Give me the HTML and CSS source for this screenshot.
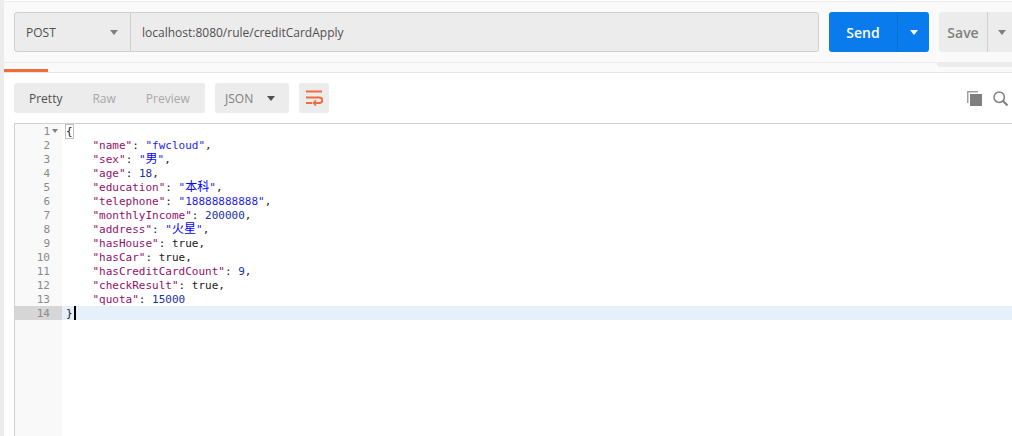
FILE: index.html
```html
<!DOCTYPE html>
<html lang="en">
<head>
<meta charset="utf-8">
<title>Postman response</title>
<link rel="stylesheet" href="styles.css">
</head>
<body>
<div class="app">
  <div class="top-strip"></div>
  <header class="request">
    <div class="url-group">
      <div class="method"><span>POST</span><i class="caret"></i></div>
      <div class="url">localhost:8080/rule/creditCardApply</div>
    </div>
    <div class="send"><span class="send-label">Send</span><span class="send-drop"><i class="caret white"></i></span></div>
    <div class="save"><span class="save-label">Save</span><span class="save-drop"><i class="caret"></i></span></div>
  </header>
  <div class="tabs"><div class="tab-active"></div><div class="save-shadow"></div></div>
  <div class="toolbar">
    <div class="views"><span class="on">Pretty</span><span>Raw</span><span>Preview</span></div>
    <div class="format"><span>JSON</span><i class="caret dark"></i></div>
    <div class="wrap">
      <svg width="18" height="16" viewBox="0 0 18 16" fill="none" stroke="#f26b3a" stroke-width="2">
        <path d="M1 1.500h16M1 7.500h13.500a2.500 2.500 0 0 1 0 5.500H9"/>
        <path d="M1 13h6"/>
        <path d="M11 10.300L8.500 13l2.500 2.700" stroke-width="1.500"/>
      </svg>
    </div>
    <div class="tools">
      <svg width="15" height="15" viewBox="0 0 15 15"><path fill="#a0a0a0" d="M0 0h11v1.500H1.500V12H0z"/><path fill="#7f7f7f" d="M3 3h12v12H3z"/></svg>
      <svg width="15" height="15" viewBox="0 0 15 15" fill="none" stroke="#7f7f7f" stroke-width="1.500"><circle cx="6.200" cy="6.200" r="5.200"/><path d="M10 10l4.500 4.500" stroke-width="2"/></svg>
    </div>
  </div>
  <div class="editor">
    <div class="gutter">
      <div class="ln">1<i class="fold"></i></div><div class="ln">2</div><div class="ln">3</div><div class="ln">4</div><div class="ln">5</div><div class="ln">6</div><div class="ln">7</div><div class="ln">8</div><div class="ln">9</div><div class="ln">10</div><div class="ln">11</div><div class="ln">12</div><div class="ln">13</div><div class="ln cur">14</div>
    </div>
    <div class="code">
      <div class="line"><span class="brace">{</span></div>
      <div class="line">    <span class="k">"name"</span>: <span class="s">"fwcloud"</span>,</div>
      <div class="line">    <span class="k">"sex"</span>: <span class="s">"<span class="cjk">男</span>"</span>,</div>
      <div class="line">    <span class="k">"age"</span>: <span class="n">18</span>,</div>
      <div class="line">    <span class="k">"education"</span>: <span class="s">"<span class="cjk">本科</span>"</span>,</div>
      <div class="line">    <span class="k">"telephone"</span>: <span class="s">"18888888888"</span>,</div>
      <div class="line">    <span class="k">"monthlyIncome"</span>: <span class="n">200000</span>,</div>
      <div class="line">    <span class="k">"address"</span>: <span class="s">"<span class="cjk">火星</span>"</span>,</div>
      <div class="line">    <span class="k">"hasHouse"</span>: true,</div>
      <div class="line">    <span class="k">"hasCar"</span>: true,</div>
      <div class="line">    <span class="k">"hasCreditCardCount"</span>: <span class="n">9</span>,</div>
      <div class="line">    <span class="k">"checkResult"</span>: true,</div>
      <div class="line">    <span class="k">"quota"</span>: <span class="n">15000</span></div>
      <div class="line active">}<i class="cursor"></i></div>
    </div>
  </div>
</div>
</body>
</html>
```
FILE: styles.css
```css
* { box-sizing: border-box; }
html, body { margin: 0; height: 100%; overflow: hidden; background: #fff; }
body { font-family: "Open Sans", "Noto Sans", sans-serif; }
.app { width: 1012px; height: 436px; border-left: 4px solid #ececec; display: flex; flex-direction: column; overflow: hidden; }
.top-strip { height: 2px; background: #fff; border-bottom: 1px solid #ececec; flex: none; }
.request { height: 61px; flex: none; background: #fafafa; border-bottom: 1px solid #ececec; display: flex; align-items: flex-start; padding: 10px 0 0 10px; }
.url-group { width: 805px; height: 40px; display: flex; background: #ececec; border: 1px solid #d0d0d0; border-radius: 3px; flex: none; }
.method { width: 116px; border-right: 1px solid #d0d0d0; display: flex; align-items: center; justify-content: space-between; padding: 0 12px 0 11px; font-size: 12px; color: #505050; }
.url { padding-left: 11px; display: flex; align-items: center; font-size: 12px; color: #505050; }
.caret { display: block; width: 0; height: 0; border-left: 4px solid transparent; border-right: 4px solid transparent; border-top: 5px solid #808080; }
.caret.white { border-top-color: #fff; }
.caret.dark { border-top-color: #505050; }
.send { margin-left: 10px; width: 100px; height: 40px; flex: none; display: flex; background: #097bed; border-radius: 3px; color: #fff; font-size: 14px; font-weight: 600; }
.send-label { width: 69px; display: flex; align-items: center; justify-content: center; border-right: 1px solid #0a6fd4; }
.send-drop { flex: 1; display: flex; align-items: center; justify-content: center; }
.save { margin-left: 10px; width: 90px; height: 40px; flex: none; display: flex; background: #ececec; border-radius: 3px; color: #808080; font-size: 14px; font-weight: 600; }
.save-label { width: 49px; display: flex; align-items: center; justify-content: center; border-right: 1px solid #d0d0d0; }
.save-drop { flex: 1; display: flex; align-items: center; padding-left: 10px; }
.tabs { height: 10px; flex: none; background: #fafafa; border-bottom: 1px solid #e4e4e4; position: relative; }
.tab-active { position: absolute; left: 0; top: 6px; width: 44px; height: 3px; background: #f26b3a; }
.save-shadow { position: absolute; left: 933px; right: 0; top: 0; height: 4px; background: #ececec; border-bottom-left-radius: 3px; }
.toolbar { height: 30px; margin-top: 10px; flex: none; display: flex; align-items: stretch; padding: 0 0 0 10px; font-size: 12px; }
.views { width: 191px; background: #ececec; border-radius: 3px; display: flex; align-items: center; padding-left: 15px; gap: 30px; color: #a8a8a8; }
.views .on { color: #505050; }
.format { margin-left: 10px; width: 74px; background: #ececec; border-radius: 3px; display: flex; align-items: center; justify-content: space-between; padding: 0 14px 0 10px; color: #808080; }
.wrap { margin-left: 10px; width: 30px; background: #ececec; border-radius: 3px; display: flex; align-items: center; justify-content: center; }
.tools { margin-left: auto; display: flex; align-items: center; gap: 11px; padding-right: 4px; padding-top: 1px; }
.tools svg { flex: none; }
.editor { margin: 10px 0 0 10px; flex: 1; display: flex; border-top: 1px solid #d0d0d0; border-left: 1px solid #d0d0d0; font-family: "DejaVu Sans Mono", monospace; font-size: 11px; line-height: 16px; min-height: 0; }
.gutter { width: 47px; flex: none; background: #f9f9f9; color: #8a8a8a; }
.ln { height: 14px; text-align: right; padding-right: 12px; position: relative; }
.ln.cur { background: #d6d6d6; }
.fold { position: absolute; right: 4px; top: 5px; width: 0; height: 0; border-left: 3px solid transparent; border-right: 3px solid transparent; border-top: 4px solid #808080; }
.code { flex: 1; color: #202020; min-width: 0; font-family: "DejaVu Sans Mono", "Noto Sans CJK SC", monospace; }
.line { height: 14px; padding-left: 4px; white-space: pre; }
.line.active { background: #e6f0fb; }
.cursor { display: inline-block; width: 2px; height: 14px; background: #000; vertical-align: top; margin-left: 1px; }
.brace { outline: 1px solid #c0c0c0; }
.k { color: #92106b; }
.s { color: #1f1fe6; }
.n { color: #1c2f9e; }
.cjk { font-size: 12px; line-height: 0; color: #0000ff; }
```
